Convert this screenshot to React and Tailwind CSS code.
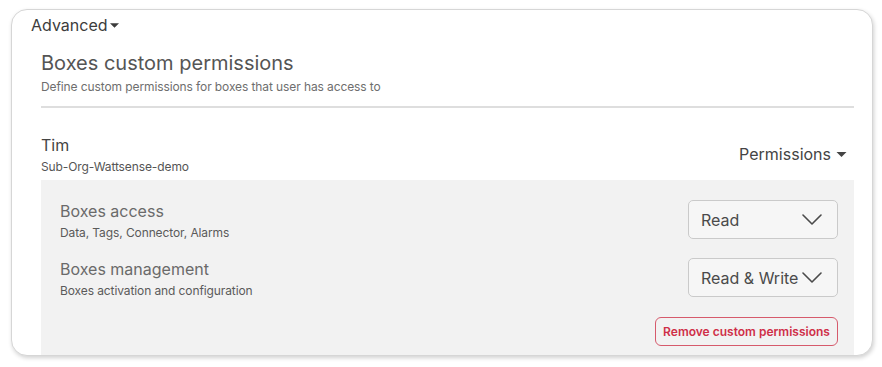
import React from "react";

function Caret({ className }) {
  return (
    <svg viewBox="0 0 10 5" className={className} fill="currentColor">
      <path d="M0 0 L10 0 L5 5 Z" />
    </svg>
  );
}

function Chevron() {
  return (
    <svg viewBox="0 0 20 11" className="w-[20px] h-[11px] text-[#4a4a4a]" fill="none" stroke="currentColor" strokeWidth="1.6" strokeLinecap="round" strokeLinejoin="round">
      <path d="M1 1 L10 10 L19 1" />
    </svg>
  );
}

function Select({ value }) {
  return (
    <div className="mt-px w-[150px] h-[39px] shrink-0 rounded-[5px] border border-[#cacaca] bg-[#f6f6f6] flex items-center pl-[12px] pr-[15px] justify-between">
      <span className="text-[16px] leading-6 text-[#4a4a4a] whitespace-nowrap">{value}</span>
      <Chevron />
    </div>
  );
}

function Row({ title, sub, value, className }) {
  return (
    <div className={"flex items-start justify-between " + className}>
      <div>
        <div className="text-[16px] leading-6 text-[#6a6a6a]">{title}</div>
        <div className="mt-[2px] text-[12px] leading-4 text-[#5a5a5a] tracking-[-0.1px]">{sub}</div>
      </div>
      <Select value={value} />
    </div>
  );
}

export default function App() {
  return (
    <div className="w-[882px] h-[367px] bg-white pt-[9px] pl-[11px]" style={{ fontFamily: "Inter, 'Noto Sans', sans-serif" }}>
      <div className="w-[862px] h-[347px] rounded-[16px] border border-[#d6d6d6] bg-white shadow-[1px_2px_4px_rgba(0,0,0,0.18)] overflow-hidden pl-[19px] pr-[18px] pt-[3px]">
        <div className="flex items-center text-[16px] leading-6 text-[#3c3c3c]">
          <span>Advanced</span>
          <Caret className="ml-[2px] w-[9px] h-[5px] mt-[1px]" />
        </div>
        <div className="ml-[10px]">
          <div className="mt-[12px] text-[20px] leading-7 text-[#555555]">Boxes custom permissions</div>
          <div className="mt-[2px] text-[12px] leading-4 text-[#6e6e6e] tracking-[-0.1px]">Define custom permissions for boxes that user has access to</div>
          <div className="mt-[11px] h-[2px] bg-[#dedede]" />
          <div className="mt-[25px] flex items-center justify-between">
            <div>
              <div className="text-[16px] leading-6 text-[#444444]">Tim</div>
              <div className="mt-[2px] text-[12px] leading-4 text-[#555555] tracking-[-0.1px]">Sub-Org-Wattsense-demo</div>
            </div>
            <div className="flex items-center mr-[7px] text-[16px] leading-6 text-[#444444]">
              <span>Permissions</span>
              <Caret className="ml-[5px] w-[11px] h-[5px] mt-[1px]" />
            </div>
          </div>
          <div className="mt-[5px] bg-[#f2f2f2] pl-[19px] pr-[16px] pt-[19px] h-[200px]">
            <Row title="Boxes access" sub="Data, Tags, Connector, Alarms" value="Read" className="" />
            <Row title="Boxes management" sub="Boxes activation and configuration" value="Read & Write" className="mt-[16px]" />
            <div className="mt-[18px] flex justify-end">
              <button className="w-[183px] h-[29px] rounded-[6px] border border-[#d65a6c] text-[12px] font-semibold text-[#cf2f48] flex items-center justify-center bg-transparent">
                Remove custom permissions
              </button>
            </div>
          </div>
        </div>
      </div>
    </div>
  );
}
